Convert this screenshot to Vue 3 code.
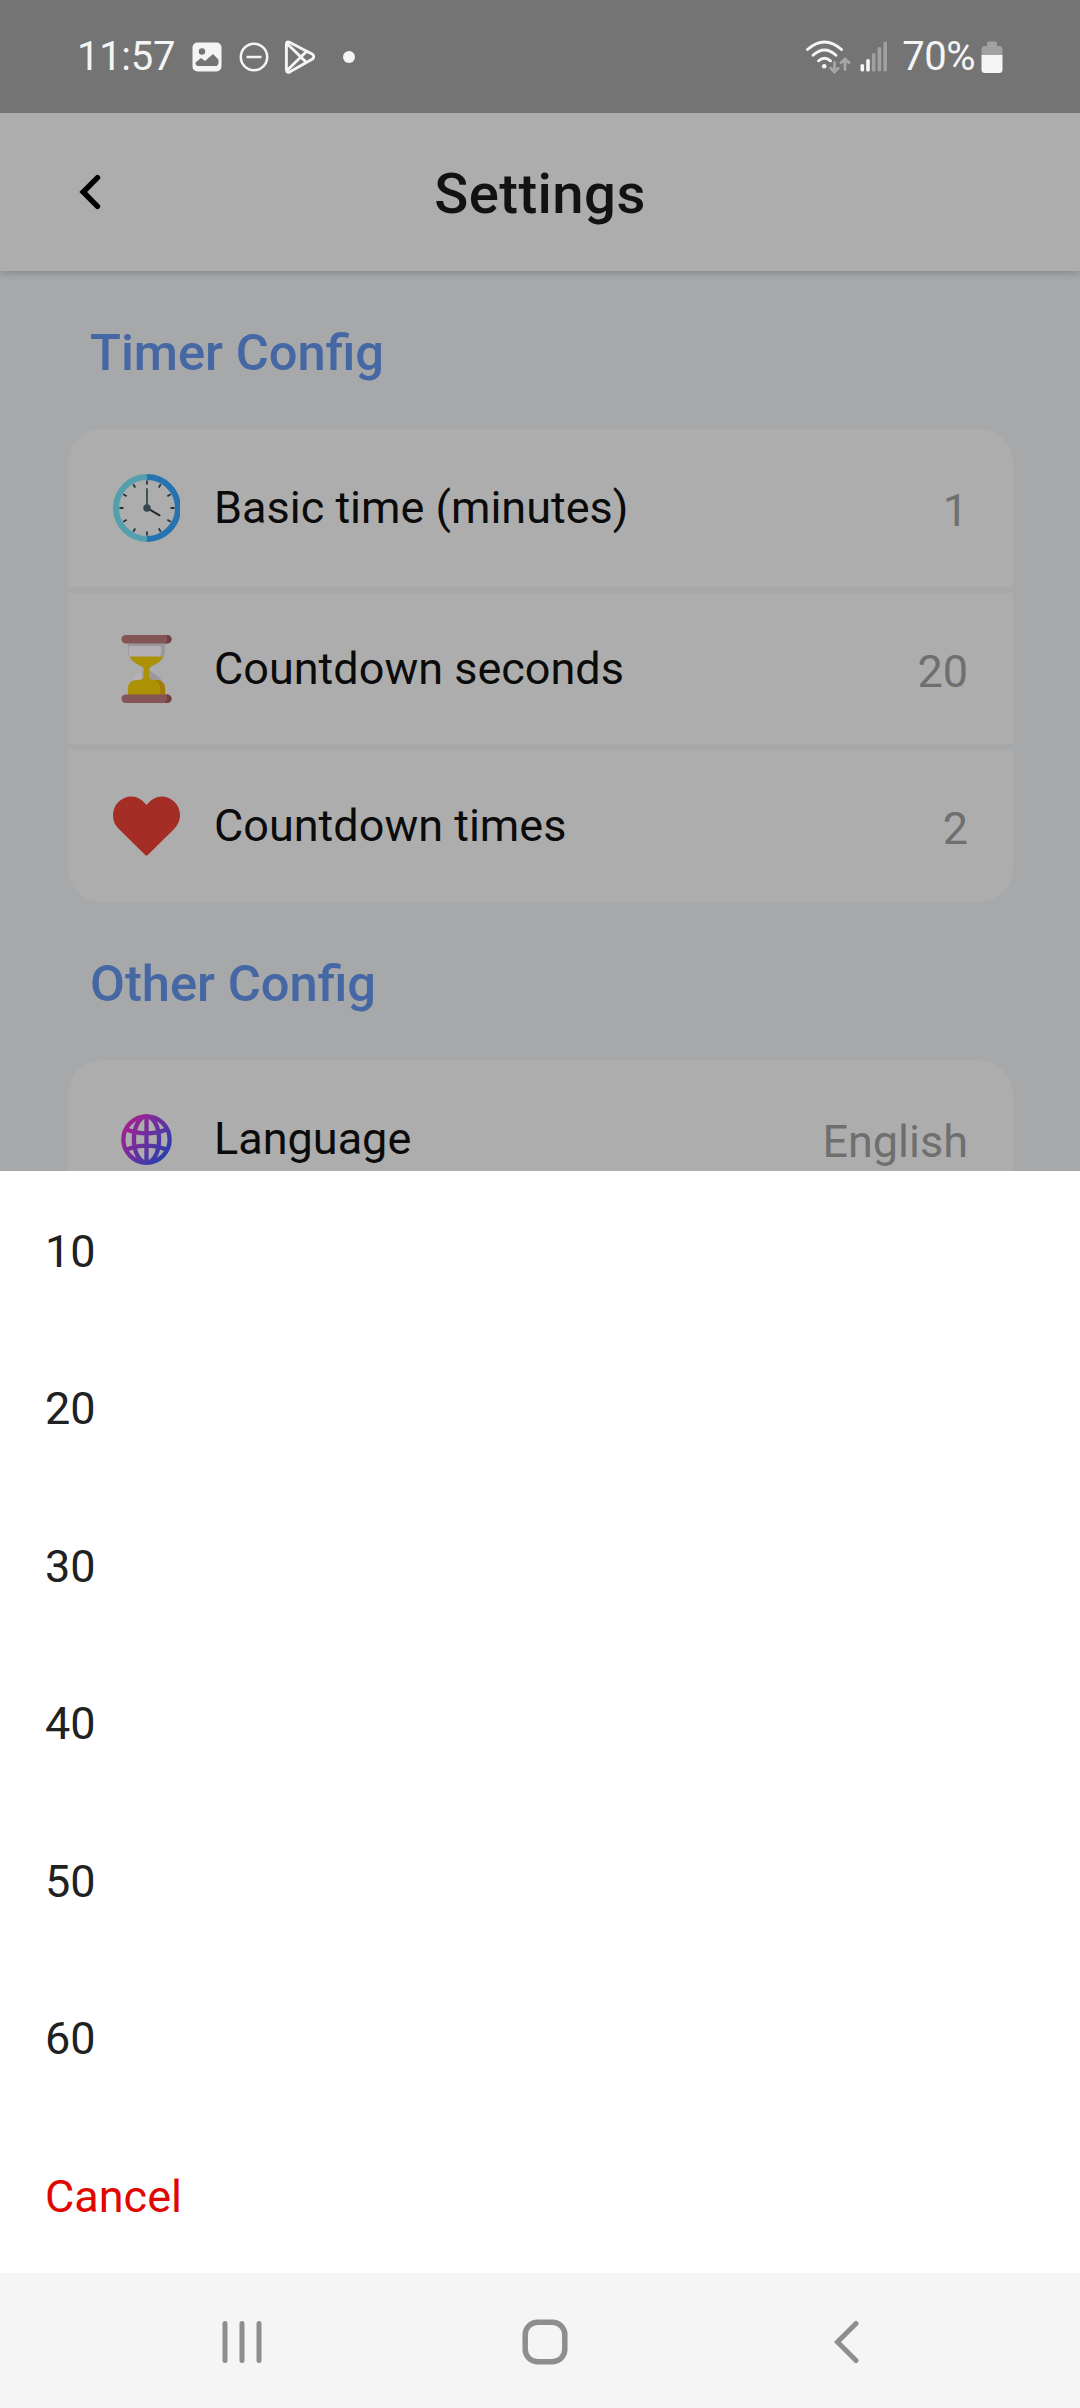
<script setup>
const timerRows = [
  { icon: 'clock', label: 'Basic time (minutes)', value: '1' },
  { icon: 'hourglass', label: 'Countdown seconds', value: '20' },
  { icon: 'heart', label: 'Countdown times', value: '2' },
]
const options = ['10', '20', '30', '40', '50', '60']
const ticks = Array.from({ length: 12 }, (_, i) => i * 30)
</script>

<template>
  <div class="screen">
    <div class="status">
      <div class="status-left">
        <span class="time">11:57</span>
        <svg class="st-image" width="30" height="30" viewBox="0 0 30 30">
          <rect x="0.5" y="0.5" width="29" height="29" rx="5" fill="#f5f5f5" />
          <circle cx="10" cy="9.5" r="3.2" fill="#747474" />
          <path d="M3.5 20.5 9 16l4 3 8-7 5.5 5.5V21.5L25 24H5l-1.5-2Z" fill="#747474" />
        </svg>
        <svg class="st-dnd" width="30" height="30" viewBox="0 0 30 30" fill="none" stroke="#f5f5f5" stroke-width="2.5">
          <circle cx="15" cy="15" r="13.2" />
          <path d="M7.5 15h15" />
        </svg>
        <svg class="st-play" width="32" height="34" viewBox="0 0 32 34" fill="none" stroke="#f5f5f5" stroke-width="2.9" stroke-linejoin="round">
          <path d="M2.4 4.5Q2.4 0.7 6 2.5L28.5 14.3Q31 17 28.5 19L6 31.8Q2.4 33.3 2.4 29.5Z" />
          <path d="M3 3.5 22.5 22.5M3 30.5 22.5 11.5" />
        </svg>
        <span class="dot"></span>
      </div>
      <div class="status-right">
        <svg class="st-wifi" width="48" height="34" viewBox="0 0 48 34" fill="none" stroke-linecap="round">
          <g stroke="#f5f5f5" stroke-width="2.9">
            <path d="M2.5 9.5Q19.5-5.5 36.5 9.5" />
            <path d="M8 15.3Q19.5 4.5 31 15.3" />
            <path d="M13.5 20.8Q19.5 15.8 25.5 20.8" />
          </g>
          <circle cx="19.2" cy="26.3" r="2.3" fill="#f5f5f5" />
          <path d="M29.5 22.5V31M25.8 28.3l3.7 3.7 3.7-3.7M40 29.5V20M36 22.7 40 19l4 3.7" stroke="#a6a6a6" stroke-width="2.9" />
        </svg>
        <svg class="st-signal" width="28" height="31" viewBox="0 0 28 31">
          <rect x="0.5" y="23" width="3.6" height="7.5" rx="1.6" fill="#f5f5f5" />
          <rect x="6.2" y="18" width="3.6" height="12.5" rx="1.6" fill="#f5f5f5" />
          <rect x="11.9" y="12" width="3.6" height="18.5" rx="1.6" fill="#a1a1a1" />
          <rect x="17.6" y="6" width="3.6" height="24.5" rx="1.6" fill="#a1a1a1" />
          <rect x="23.4" y="0.5" width="3.6" height="30" rx="1.6" fill="#a1a1a1" />
        </svg>
        <span class="pct">70%</span>
        <svg class="st-batt" width="22" height="32" viewBox="0 0 22 32">
          <path d="M0.5 9Q0.5 5 4 5H6V2Q6 0.5 8 0.5H14Q16 0.5 16 2V5H18Q21.5 5 21.5 9V14H0.5Z" fill="#a1a1a1" />
          <path d="M0.5 14H21.5V28.5Q21.5 32 18 32H4Q0.5 32 0.5 28.5Z" fill="#f5f5f5" />
        </svg>
      </div>
    </div>

    <header class="appbar">
      <svg class="back" width="22" height="36" viewBox="0 0 22 36" fill="none" stroke="#000" stroke-width="5.4" stroke-linecap="round">
        <path d="M18.5 3.7 4.2 18 18.5 32.3" />
      </svg>
      <h1>Settings</h1>
    </header>

    <main class="body">
      <h2>Timer Config</h2>
      <div class="card">
        <div v-for="r in timerRows" :key="r.label" class="row">
          <div class="icon">
            <svg v-if="r.icon === 'clock'" width="67" height="68" viewBox="0 0 67 68">
              <path d="M34 3A31 31 0 0 0 34 65" fill="none" stroke="#539fad" stroke-width="6" />
              <path d="M34 3A31 31 0 0 1 34 65" fill="none" stroke="#2773af" stroke-width="6" />
              <path v-for="a in ticks" :key="a" d="M34 6.5V10.5" stroke="#263238" stroke-width="1.8" :transform="`rotate(${a} 34 34)`" />
              <path d="M34 34V15" stroke="#37474f" stroke-width="1.8" stroke-linecap="round" />
              <path d="M34 34 46.5 41.3" stroke="#1c282e" stroke-width="2" stroke-linecap="round" />
              <circle cx="34" cy="34" r="3.7" fill="#37474f" />
            </svg>
            <svg v-else-if="r.icon === 'hourglass'" width="51" height="68" viewBox="0 0 52 68" preserveAspectRatio="none">
              <path d="M7 8H45V15Q45 24 36 29Q29 32 29 34Q29 36 36 40Q45 46 45 60H7Q7 46 16 40Q23 36 23 34Q23 32 16 29Q7 24 7 15Z" fill="#9b979c" />
              <path d="M8 11H38Q41 11 41 14V18L40 22H9Q8 18 8 15Z" fill="#b2b0b4" />
              <path d="M21 36.5Q12 40 9 50L15 46 22 44Z" fill="#b5b3b7" />
              <path d="M9 21.5H43Q40 28 31 31Q28.5 32.5 28.5 35V41Q28.5 45 34 45H39Q45 48 45 54V60H7V54Q7 45 17 45Q23.5 45 23.5 40V35Q23.5 32 18 30Q10.5 26 9 21.5Z" fill="#ac9104" />
              <path d="M35 45H38Q45 47 45 54V60H40V54Q40 48 35 45Z" fill="#a37b08" />
              <rect x="0.5" y="0" width="51" height="8.5" rx="4.2" fill="#835557" />
              <rect x="0.5" y="59.5" width="51" height="8.5" rx="4.2" fill="#835557" />
              <path d="M46 0H47.5Q51.5 1 51.5 4.2T47 8.5H44.5Q47 7 47 4T46 0ZM46 59.5H47.5Q51.5 60.5 51.5 63.8T47 68H44.5Q47 66.5 47 63.5T46 59.5Z" fill="#713f42" />
            </svg>
            <svg v-else width="67" height="60" viewBox="0 0 67 60">
              <path d="M5.4 32.5A18.5 18.5 0 0 1 0 19.2A18.6 18.6 0 0 1 18.5 0.5Q27 0.5 33.5 9Q40 0.5 48.5 0.5A18.6 18.6 0 0 1 67 19.2Q67 26.5 61.6 32.5L34.8 59Q33.5 60.2 32.2 59Z" fill="#a42d25" />
            </svg>
          </div>
          <span class="label">{{ r.label }}</span>
          <span class="value">{{ r.value }}</span>
        </div>
      </div>
      <h2>Other Config</h2>
      <div class="card">
        <div class="row">
          <div class="icon">
            <svg width="51" height="51" viewBox="0 0 52 52" fill="none" stroke="url(#globe)" stroke-width="4.4">
              <defs>
                <linearGradient id="globe" gradientUnits="userSpaceOnUse" x1="4" y1="10" x2="46" y2="44">
                  <stop offset="0" stop-color="#a3218f" />
                  <stop offset="0.5" stop-color="#6a2fa0" />
                  <stop offset="1" stop-color="#2740ae" />
                </linearGradient>
              </defs>
              <circle cx="26" cy="26" r="23.6" />
              <ellipse cx="26" cy="26" rx="12.8" ry="23.6" />
              <path d="M26.01 2 25.99 50M5 15.5Q26 24 47 15.5M5 36.5Q26 28 47 36.5" />
            </svg>
          </div>
          <span class="label">Language</span>
          <span class="value">English</span>
        </div>
      </div>
    </main>

    <section class="sheet">
      <div v-for="o in options" :key="o" class="option">{{ o }}</div>
      <div class="option cancel">Cancel</div>
    </section>

    <nav class="navbar">
      <svg class="recents" width="42" height="44" viewBox="0 0 42 44" stroke="#8e8e8e" stroke-width="5" stroke-linecap="round">
        <path d="M4 3.5V40.5M21 3.5V40.5M38 3.5V40.5" />
      </svg>
      <svg class="home" width="46" height="46" viewBox="0 0 46 46" fill="none" stroke="#8e8e8e" stroke-width="5.5">
        <rect x="3.2" y="3.2" width="39.6" height="39.6" rx="12.5" />
      </svg>
      <svg class="nav-back" width="26" height="44" viewBox="0 0 26 44" fill="none" stroke="#8e8e8e" stroke-width="5" stroke-linecap="round">
        <path d="M22 3.5 3.5 22 22 40.5" />
      </svg>
    </nav>
  </div>
</template>

<style>
body { margin: 0; }
</style>

<style scoped>
.screen {
  width: 1080px;
  height: 2408px;
  display: flex;
  flex-direction: column;
  overflow: hidden;
  background: #a6a8aa;
  font-family: Roboto, "Noto Sans", sans-serif;
  font-size: 45px;
  color: #0b0b0b;
}
.status {
  flex: none;
  z-index: 2;
  height: 113px;
  box-sizing: border-box;
  background: #747474;
  color: #f5f5f5;
  display: flex;
  justify-content: space-between;
  align-items: center;
  padding: 0 77px;
  font-size: 40px;
}
.status-left, .status-right { display: flex; align-items: center; }
.time { letter-spacing: -0.3px; }
.st-image { margin-left: 17px; }
.st-dnd { margin-left: 17px; }
.st-play { margin-left: 15px; }
.dot { width: 12px; height: 12px; border-radius: 50%; background: #f5f5f5; margin-left: 27px; }
.st-signal { margin-left: 7px; }
.pct { margin-left: 14px; letter-spacing: -0.5px; }
.st-batt { margin-left: 6px; }
.appbar {
  flex: none;
  z-index: 1;
  height: 158px;
  background: #adadad;
  display: grid;
  grid-template-columns: 1fr auto 1fr;
  align-items: center;
  box-shadow: 0 2px 8px rgba(0, 0, 0, 0.2);
}
.back { margin-left: 79px; }
h1 {
  margin: 4px 0 0;
  font-size: 56.25px;
  font-weight: 500;
  line-height: 66px;
  letter-spacing: 0.42px;
  color: #121212;
}
.body { flex: none; height: 900px; padding: 0 67px 0 68px; overflow: hidden; }
h2 {
  margin: 0;
  padding: 52px 0 0 22px;
  height: 106px;
  font-size: 50.7px;
  line-height: 60px;
  font-weight: 500;
  color: #4567a3;
}
.card { border-radius: 34px; overflow: hidden; display: flex; flex-direction: column; gap: 6px; }
.row { height: 151px; display: flex; align-items: center; background: #adadad; padding: 0 45px; }
.row:last-child { height: 152px; }
.row:first-child { height: 158px; }
.icon { width: 67px; display: flex; justify-content: center; }
.label { margin: 0 0 1px 34px; flex: 1; }
.value { color: #6f6f6f; margin-top: 5px; }
.sheet { flex: none; height: 1102px; background: #fff; }
.option {
  height: 157.5px;
  box-sizing: border-box;
  display: flex;
  align-items: center;
  padding: 3px 0 0 45px;
  color: #212121;
}
.cancel { color: #e10600; }
.navbar {
  flex: 1;
  background: #f5f5f5;
  display: flex;
  align-items: center;
  padding: 2px 0 0 221px;
}
.home { margin-left: 259px; }
.nav-back { margin-left: 266px; }
</style>
